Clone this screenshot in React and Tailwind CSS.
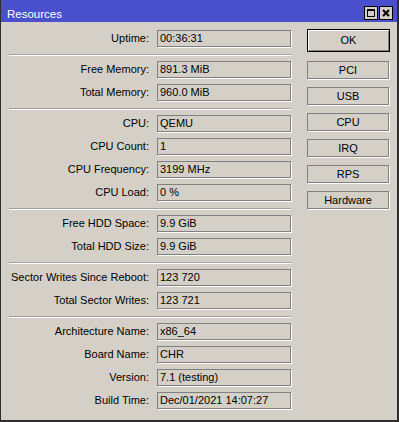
const groups = [
  [["Uptime:", "00:36:31"]],
  [
    ["Free Memory:", "891.3 MiB"],
    ["Total Memory:", "960.0 MiB"],
  ],
  [
    ["CPU:", "QEMU"],
    ["CPU Count:", "1"],
    ["CPU Frequency:", "3199 MHz"],
    ["CPU Load:", "0 %"],
  ],
  [
    ["Free HDD Space:", "9.9 GiB"],
    ["Total HDD Size:", "9.9 GiB"],
  ],
  [
    ["Sector Writes Since Reboot:", "123 720"],
    ["Total Sector Writes:", "123 721"],
  ],
  [
    ["Architecture Name:", "x86_64"],
    ["Board Name:", "CHR"],
    ["Version:", "7.1 (testing)"],
    ["Build Time:", "Dec/01/2021 14:07:27"],
  ],
];

const buttons = ["PCI", "USB", "CPU", "IRQ", "RPS", "Hardware"];

function Row({ label, value }) {
  return (
    <div className="flex items-center h-[17px]">
      <div className="w-[140px] text-right leading-[15px] whitespace-nowrap">{label}</div>
      <div className="ml-[8px] w-[134px] h-[17px] border border-[#808080] shadow-[1px_1px_0_#ffffff] pl-[2px] leading-[15px] text-black whitespace-nowrap">
        {value}
      </div>
    </div>
  );
}

function TitleButton({ children }) {
  return (
    <div className="w-[14px] h-[14px] bg-[#d4d0c8] border border-black flex items-center justify-center">
      {children}
    </div>
  );
}

export default function App() {
  return (
    <div className="w-[399px] h-[422px] bg-[#d4d0c8] border-l border-r-2 border-b-2 border-[#2e2e2e] font-['Liberation_Sans',Arial,sans-serif] text-[11px] text-black overflow-hidden">
      <div className="h-[22px] bg-[#4a4fcb] flex items-start justify-between">
        <span className="text-white text-[11.5px] leading-[13px] mt-[8px] ml-[6px]">Resources</span>
        <div className="flex gap-[1px] mt-[6px] mr-[4px]">
          <TitleButton>
            <svg width="10" height="10" viewBox="0 0 10 10">
              <rect x="1.5" y="1.5" width="7" height="7" fill="none" stroke="#000" strokeWidth="1" />
              <rect x="1" y="1" width="8" height="2" fill="#000" />
            </svg>
          </TitleButton>
          <TitleButton>
            <svg width="10" height="10" viewBox="0 0 10 10">
              <path d="M2 2 L8 8 M8 2 L2 8" stroke="#000" strokeWidth="2" />
            </svg>
          </TitleButton>
        </div>
      </div>
      <div className="flex">
        <div className="w-[291px] pl-[8px] pt-[8px]">
          {groups.map((g, i) => (
            <div key={i}>
              {i > 0 && (
                <div className="mt-[7px] mb-[5px] h-[2px] w-[282px] border-t border-[#a0a0a0] border-b border-b-white" />
              )}
              <div className="flex flex-col gap-[6px]">
                {g.map(([l, v]) => (
                  <Row key={l} label={l} value={v} />
                ))}
              </div>
            </div>
          ))}
        </div>
        <div className="ml-[15px] pt-[7px] flex flex-col">
          <button className="w-[83px] h-[23px] border border-black bg-[#d4d0c8] shadow-[inset_1px_1px_0_#ffffff,inset_-1px_-1px_0_#808080] text-center leading-[21px] mb-[9px]">
            OK
          </button>
          <div className="flex flex-col gap-[8px]">
            {buttons.map((b) => (
              <button
                key={b}
                className="w-[82px] h-[18px] border border-[#808080] shadow-[1px_1px_0_#ffffff] bg-[#d4d0c8] text-center leading-[16px]"
              >
                {b}
              </button>
            ))}
          </div>
        </div>
      </div>
    </div>
  );
}
